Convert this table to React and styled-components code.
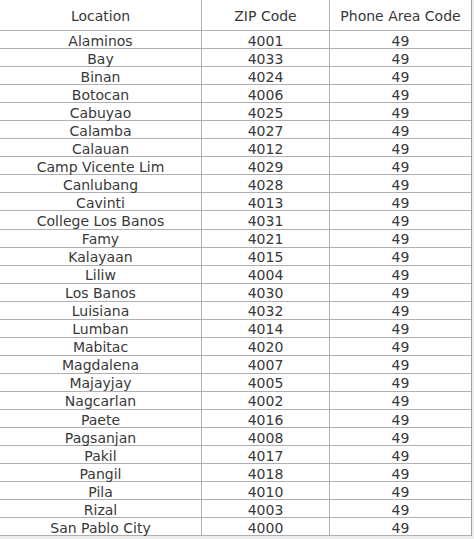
import React from "react";
import styled, { createGlobalStyle } from "styled-components";

const GlobalStyle = createGlobalStyle`
  html, body {
    margin: 0;
    padding: 0;
    background-color: #ededed;
  }
`;

const Table = styled.div`
  width: 471px;
  background-color: #ffffff;
  border-right: 1px solid #a0a0a0;
  font-family: "DejaVu Sans", Verdana, sans-serif;
  font-size: 14px;
  color: #383838;
`;

const Row = styled.div`
  display: grid;
  grid-template-columns: 202px 128px 141px;
  height: ${(p) => (p.$head ? "31px" : "18.05px")};
  box-sizing: border-box;
  border-bottom: 1px solid #b0b0b0;
`;

const Cell = styled.div`
  display: flex;
  align-items: center;
  justify-content: center;
  white-space: nowrap;
  border-right: ${(p) => (p.$last ? "none" : "1px solid #b0b0b0")};
  line-height: 1;
  padding-top: ${(p) => (p.$head ? "1px" : "2px")};
  box-sizing: border-box;
`;

const rows = [
  ["Alaminos", "4001"],
  ["Bay", "4033"],
  ["Binan", "4024"],
  ["Botocan", "4006"],
  ["Cabuyao", "4025"],
  ["Calamba", "4027"],
  ["Calauan", "4012"],
  ["Camp Vicente Lim", "4029"],
  ["Canlubang", "4028"],
  ["Cavinti", "4013"],
  ["College Los Banos", "4031"],
  ["Famy", "4021"],
  ["Kalayaan", "4015"],
  ["Liliw", "4004"],
  ["Los Banos", "4030"],
  ["Luisiana", "4032"],
  ["Lumban", "4014"],
  ["Mabitac", "4020"],
  ["Magdalena", "4007"],
  ["Majayjay", "4005"],
  ["Nagcarlan", "4002"],
  ["Paete", "4016"],
  ["Pagsanjan", "4008"],
  ["Pakil", "4017"],
  ["Pangil", "4018"],
  ["Pila", "4010"],
  ["Rizal", "4003"],
  ["San Pablo City", "4000"],
];

const App = () => {
  return (
    <>
      <GlobalStyle />
      <Table>
        <Row $head>
          <Cell $head>Location</Cell>
          <Cell $head>ZIP Code</Cell>
          <Cell $head $last>
            Phone Area Code
          </Cell>
        </Row>
        {rows.map(([place, zip]) => (
          <Row key={place}>
            <Cell>{place}</Cell>
            <Cell>{zip}</Cell>
            <Cell $last>49</Cell>
          </Row>
        ))}
      </Table>
    </>
  );
};

export default App;
